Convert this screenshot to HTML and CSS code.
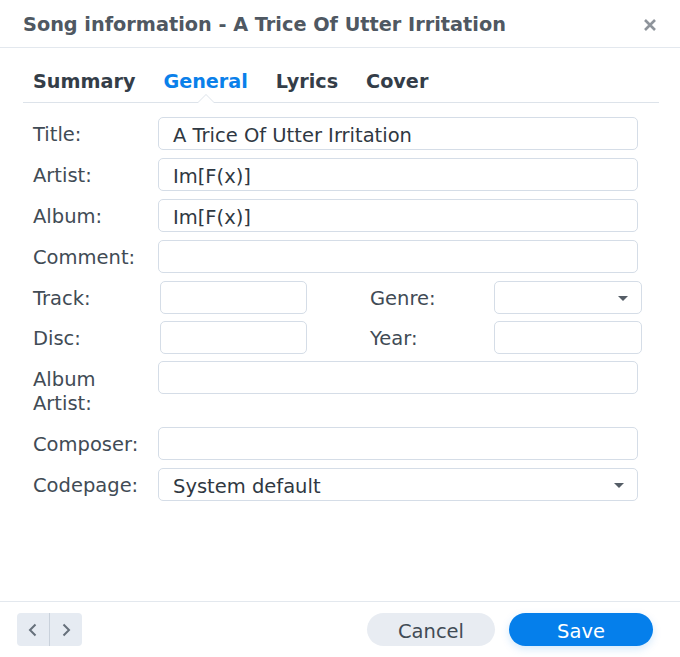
FILE: index.html
```html
<!DOCTYPE html>
<html>
<head>
<meta charset="utf-8">
<link rel="stylesheet" href="styles.css">
</head>
<body>
<div class="dialog">
  <header class="header">
    <h1 class="title">Song information - A Trice Of Utter Irritation</h1>
    <button class="close" aria-label="Close">
      <svg width="14" height="14" viewBox="0 0 14 14"><path d="M2 2L12 12M12 2L2 12" stroke="#8e949b" stroke-width="2.6" stroke-linecap="butt"/></svg>
    </button>
  </header>
  <nav class="tabs">
    <span class="tab">Summary</span>
    <span class="tab active">General</span>
    <span class="tab">Lyrics</span>
    <span class="tab">Cover</span>
  </nav>
  <form class="form">
    <div class="row"><label class="label">Title:</label><div class="input wide">A Trice Of Utter Irritation</div></div>
    <div class="row"><label class="label">Artist:</label><div class="input wide">Im[F(x)]</div></div>
    <div class="row"><label class="label">Album:</label><div class="input wide">Im[F(x)]</div></div>
    <div class="row"><label class="label">Comment:</label><div class="input wide"></div></div>
    <div class="row split">
      <label class="label">Track:</label><div class="input small"></div>
      <label class="label label2">Genre:</label><div class="input small select"><span class="arrow"></span></div>
    </div>
    <div class="row split">
      <label class="label">Disc:</label><div class="input small"></div>
      <label class="label label2">Year:</label><div class="input small"></div>
    </div>
    <div class="row top"><label class="label multi">Album<br>Artist:</label><div class="input wide"></div></div>
    <div class="row"><label class="label">Composer:</label><div class="input wide"></div></div>
    <div class="row"><label class="label">Codepage:</label><div class="input wide select">System default<span class="arrow"></span></div></div>
  </form>
  <footer class="footer">
    <div class="nav">
      <span class="navbtn"><svg width="12" height="16" viewBox="0 0 12 16"><path d="M8.5 2.5L3 8l5.5 5.5" fill="none" stroke="#66707b" stroke-width="2"/></svg></span>
      <span class="navbtn sep"><svg width="12" height="16" viewBox="0 0 12 16"><path d="M3.5 2.5L9 8l-5.5 5.5" fill="none" stroke="#66707b" stroke-width="2"/></svg></span>
    </div>
    <div class="actions">
      <button class="btn cancel" type="button">Cancel</button>
      <button class="btn save" type="button">Save</button>
    </div>
  </footer>
</div>
</body>
</html>
```
FILE: styles.css
```css
* { box-sizing: border-box; }
html, body { margin: 0; padding: 0; background: #fff; }
body {
  font-family: "DejaVu Sans", Verdana, sans-serif;
  font-size: 19.5px;
  color: #414b55;
  width: 680px;
  height: 657px;
  overflow: hidden;
}
.dialog {
  height: 657px;
  display: flex;
  flex-direction: column;
}
.header {
  height: 48px;
  border-bottom: 1px solid #e3e8ee;
  display: flex;
  align-items: center;
  justify-content: space-between;
  padding: 2px 23px 0 23px;
}
.title {
  margin: 0;
  font-size: 19.3px;
  font-weight: bold;
  color: #4f5862;
}
.close {
  border: 0;
  background: none;
  padding: 0;
  width: 14px;
  height: 14px;
  display: flex;
}
.tabs {
  margin: 0 21px 0 23px;
  height: 55px;
  border-bottom: 1px solid #dde3ea;
  display: flex;
  align-items: flex-end;
  gap: 28px;
  padding: 0 0 8px 10px;
}
.tab {
  font-weight: bold;
  font-size: 19.2px;
  color: #343d48;
  position: relative;
  line-height: 24px;
}
.tab.active { color: #0a80ea; }
.tab.active::before,
.tab.active::after {
  content: "";
  position: absolute;
  left: 50%;
  width: 0;
  height: 0;
  border-style: solid;
}
.tab.active::before {
  bottom: -9px;
  margin-left: -9px;
  border-width: 0 9px 9px 9px;
  border-color: transparent transparent #dde3ea transparent;
}
.tab.active::after {
  bottom: -9px;
  margin-left: -8px;
  border-width: 0 8px 8px 8px;
  border-color: transparent transparent #fff transparent;
}
.form {
  padding: 14px 0 0 33px;
  display: flex;
  flex-direction: column;
  gap: 8px;
  flex: 1;
}
.row {
  display: flex;
  align-items: center;
  height: 33px;
}
.row.split { height: 32px; }
.row.top {
  align-items: flex-start;
  height: auto;
}
.label {
  width: 125px;
  flex: none;
  line-height: 24px;
  padding-top: 3px;
}
.label.multi {
  line-height: 24px;
  padding: 7px 0 3px;
}
.label2 { width: 124px; margin-left: 63px; }
.input {
  height: 33px;
  border: 1px solid #d5dde7;
  border-radius: 5px;
  padding: 3px 14px 0;
  display: flex;
  align-items: center;
  color: #2f3842;
  position: relative;
  background: #fff;
}
.input.wide { width: 480px; }
.input.small { width: 147px; margin-left: 2px; }
.label2 + .input.small { width: 148px; margin-left: 0; }
.arrow {
  position: absolute;
  right: 13px;
  top: 14px;
  width: 0;
  height: 0;
  border-left: 5px solid transparent;
  border-right: 5px solid transparent;
  border-top: 5px solid #555d66;
}
.footer {
  height: 56px;
  border-top: 1px solid #e3e8ee;
  display: flex;
  align-items: flex-start;
  justify-content: space-between;
  padding: 11px 27px 0 17px;
}
.nav {
  display: flex;
  width: 65px;
  height: 33px;
  background: #e6ebf2;
  border-radius: 4px;
}
.navbtn {
  flex: 1;
  display: flex;
  align-items: center;
  justify-content: center;
}
.navbtn.sep { border-left: 1px solid #c9d1db; }
.actions {
  display: flex;
  gap: 14px;
}
.btn {
  height: 33px;
  border: 0;
  border-radius: 17px;
  font-family: inherit;
  font-size: 19.5px;
  padding: 3px 0 0;
}
.cancel {
  width: 128px;
  background: #e8ecf2;
  color: #414b55;
}
.save {
  width: 144px;
  background: #057feb;
  color: #fff;
  box-shadow: 0 3px 8px rgba(5, 127, 235, 0.18);
}
```
